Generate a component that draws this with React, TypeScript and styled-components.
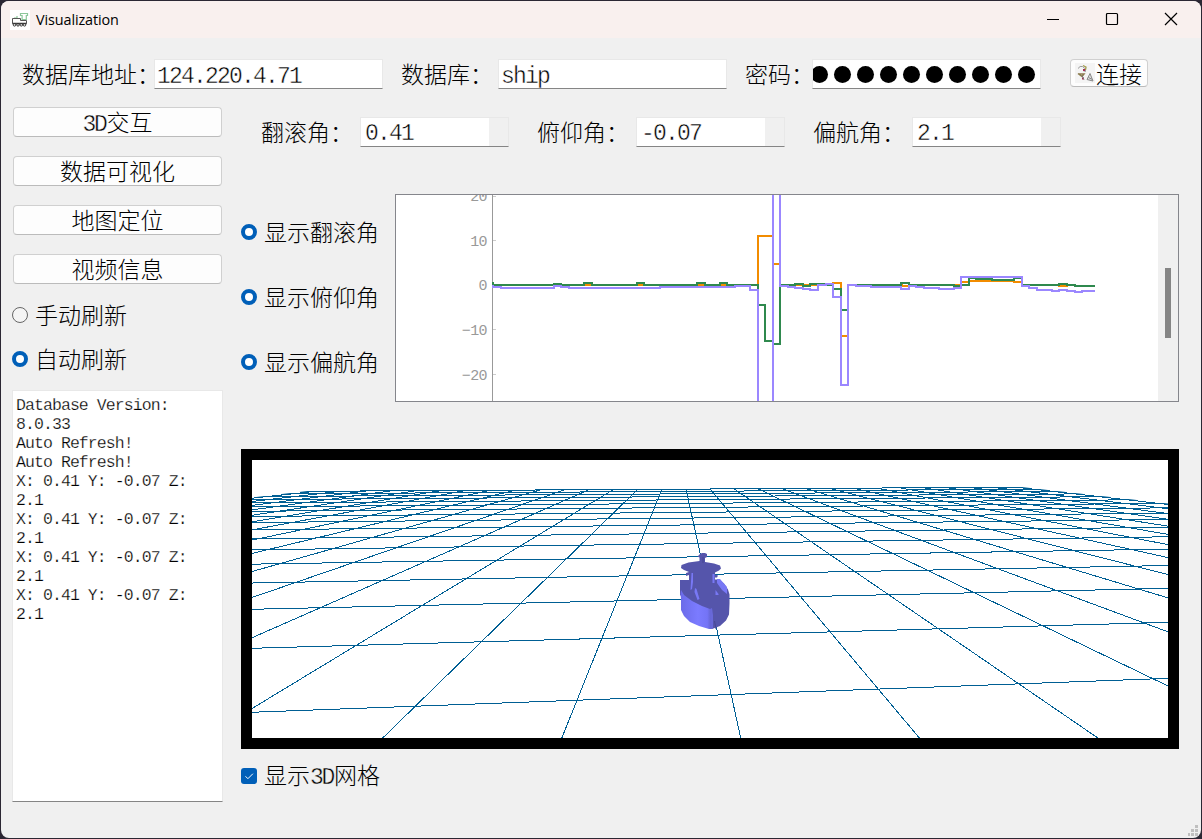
import React from "react";
import styled, { createGlobalStyle } from "styled-components";

const GlobalStyle = createGlobalStyle`
  * { box-sizing: border-box; }
  html, body { margin: 0; padding: 0; background: #1d1a26; }
`;

const cjk = `"Noto Sans CJK SC", sans-serif`;
const mono = `"Liberation Mono", "Noto Sans CJK SC", monospace`;

const Desktop = styled.div`
  width: 1202px;
  height: 839px;
  padding: 1px;
  background: #2b2733;
  overflow: hidden;
`;

const Window = styled.div`
  position: relative;
  width: 1200px;
  height: 837px;
  display: flex;
  flex-direction: column;
  background: #f0f0f0;
  border-radius: 8px;
  overflow: hidden;
  color: #000;
  font: 300 23px/28px ${cjk};
`;

const TitleBar = styled.header`
  flex: none;
  height: 37px;
  display: flex;
  align-items: center;
  padding: 0 23px 0 9px;
  background: #f9f0ee;
`;

const AppIcon = styled.svg`
  width: 20px;
  height: 20px;
  margin-right: 6px;
  background: #fff;
`;

const Title = styled.h1`
  margin: 0;
  flex: 1;
  font: 400 14.4px/20px "Open Sans", "Noto Sans", sans-serif;
  letter-spacing: -0.1px;
`;

const WindowControls = styled.div`
  display: flex;
  gap: 45px;
  margin-top: -2px;
  svg { width: 14px; height: 14px; }
`;

const ConnectionRow = styled.div`
  display: flex;
  height: 30px;
  margin: 21px 0 0 21px;
`;

const Label = styled.label<{ $width: number }>`
  flex: none;
  width: ${(p) => p.$width}px;
  height: 30px;
  white-space: nowrap;
`;

const Field = styled.div<{ $gap?: number }>`
  flex: none;
  display: flex;
  align-items: center;
  width: 229px;
  height: 30px;
  margin-right: ${(p) => p.$gap ?? 18}px;
  padding: 0 0 0 2px;
  background: #fff;
  border: 1px solid #e8e8e8;
  border-bottom-color: #858585;
  overflow: hidden;
  font: 400 23px/28px ${mono};
  letter-spacing: -1.8px;
  -webkit-text-stroke: 0.45px #fff;
`;

const FieldText = styled.span`
  padding-top: 5px;
`;

const PasswordDots = styled.div`
  display: flex;
  flex: none;
  gap: 6px;
  margin-left: -4px;
`;

const Dot = styled.i`
  width: 17px;
  height: 17px;
  border-radius: 50%;
  background: #000;
`;

const ConnectButton = styled.button`
  display: flex;
  align-items: center;
  width: 78px;
  height: 28px;
  margin: 0;
  padding: 0 0 0 4px;
  background: #fdfdfd;
  border: 1px solid #d0d0d0;
  border-bottom-color: #bbb;
  border-radius: 4px;
  font: 300 23px/26px ${cjk};
  white-space: nowrap;
  svg { flex: none; width: 20px; height: 20px; margin-right: 1px; }
`;

const Main = styled.main`
  display: flex;
  align-items: flex-start;
  padding: 18px 0 0 11px;
`;

const Sidebar = styled.aside`
  flex: none;
  width: 211px;
  margin-right: 18px;
  display: flex;
  flex-direction: column;
`;

const NavButton = styled.button`
  width: 209px;
  height: 30px;
  margin: 0 0 19px 1px;
  padding: 0 0 2px;
  background: #fdfdfd;
  border: 1px solid #d0d0d0;
  border-bottom-color: #bbb;
  border-radius: 4px;
  font: 300 23px/26px ${cjk};
`;

const Latin = styled.span<{ $halo: string }>`
  font: 400 23px/1 ${mono};
  letter-spacing: -2.3px;
  margin-right: 1px;
  -webkit-text-stroke: 0.45px ${(p) => p.$halo};
`;

const Option = styled.div<{ $height: number }>`
  display: flex;
  align-items: center;
  gap: 7px;
  height: ${(p) => p.$height}px;
  white-space: nowrap;
`;

const OptionText = styled.span`
  padding-bottom: 2px;
`;

const Radio = styled.i<{ $on?: boolean }>`
  flex: none;
  width: 16px;
  height: 16px;
  border-radius: 50%;
  background: ${(p) => (p.$on ? "#fff" : "#f5f5f5")};
  border: ${(p) => (p.$on ? "4.8px solid #005fb8" : "1px solid #666")};
`;

const RefreshOptions = styled.div`
  margin-top: -10px;
`;

const Log = styled.pre`
  width: 211px;
  height: 412px;
  margin: 9px 0 0;
  padding: 5px 0 0 3px;
  background: #fff;
  border: 1px solid #e8e8e8;
  border-bottom-color: #858585;
  font: 400 16.5px/19px ${mono};
  letter-spacing: -0.92px;
  -webkit-text-stroke: 0.25px #fff;
`;

const Content = styled.section`
  width: 938px;
  display: flex;
  flex-direction: column;
`;

const AngleRow = styled.div`
  display: flex;
  margin: 10px 0 0 20px;
`;

const SpinBox = styled.div`
  display: flex;
  width: 149px;
  height: 30px;
  margin-right: 28px;
  padding: 1px 0 0 4px;
  border: 1px solid #e8e8e8;
  border-bottom-color: #858585;
  background: linear-gradient(90deg, #fff 128px, #f0f0f0 128px);
  font: 400 23px/30px ${mono};
  letter-spacing: -1.8px;
  -webkit-text-stroke: 0.45px #fff;
`;

const ChartRow = styled.div`
  display: flex;
  height: 208px;
  margin-top: 47px;
`;

const SeriesOptions = styled.div`
  width: 154px;
  padding-top: 5px;
`;

const ChartPanel = styled.div`
  display: flex;
  width: 784px;
  height: 208px;
  background: #fff;
  border: 1px solid #85868c;
`;

const ScrollTrack = styled.div`
  width: 20px;
  padding: 73px 0 0 7px;
  background: #f0f0f0;
`;

const ScrollThumb = styled.div`
  width: 6px;
  height: 70px;
  background: #858585;
`;

const Scene = styled.div`
  height: 300px;
  margin-top: 47px;
  border: 11px solid #000;
  background: #fff;
  svg { display: block; }
`;

const CheckBox = styled.svg`
  flex: none;
  width: 16px;
  height: 16px;
  border-radius: 3px;
  background: #005fb8;
`;

const GridOption = styled(Option)`
  margin-top: 7px;
`;

const SizeGrip = styled.svg`
  position: absolute;
  right: 3px;
  bottom: 2px;
  width: 10px;
  height: 11px;
`;

const TICKS = [
  { label: "20", y: 196 },
  { label: "10", y: 240.5 },
  { label: "0", y: 285 },
  { label: "-10", y: 329.5 },
  { label: "-20", y: 374.5 },
];

const SERIES = [
  {
    color: "#f28c00",
    d: "M493 285H758V236H773V264H780V285H833V283H841V336H848V285H902V286H909V285H961V282H969V281H1014V282H1022V285H1059V286H1067V285H1075V286H1095",
  },
  {
    color: "#2f894e",
    d: "M493 282V285H554V284H561V285H584V283H592V285H637V283H644V285H697V283H705V285H720V283H727V285H758V305H765V341H773V344H780V285H795V284H803V286H810V284H825V285H833V289H841V310H848V285H877V285H901V283H909V285H954V286H961V285H969V278H976V279H992V280H1014V278H1022V285H1059V284H1067V285H1075V286H1095",
  },
  {
    color: "#9b87ff",
    d: "M493 285V287H501V288H554V286H561V287H569V288H660V287H735V286H750V290H758V420M773 420V180M780 180V286H788V287H795V288H803V289H810V290H818V285H826V284H833V297H841V385H848V285H856V286H871V287H901V289H909V286H916V287H924V288H939V289H954V288H961V277H1022V286H1029V288H1037V290H1052V291H1059V290H1067V291H1075V292H1082V291H1095",
  },
];

const AngleChart = () => (
  <svg width="762" height="206" viewBox="396 195 762 206">
    {TICKS.map((t) => (
      <g key={t.label}>
        <text
          x="487"
          y={t.y + 5}
          textAnchor="end"
          fill="#999"
          fontFamily="Liberation Mono"
          fontSize="15"
          letterSpacing="-0.6"
        >
          {t.label.replace("-", "−")}
        </text>
        <path d={`M493 ${Math.floor(t.y) + 0.5}h3`} stroke="#ccc" />
      </g>
    ))}
    <path d="M492.5 195V401" stroke="#999" />
    <g fill="none" strokeWidth="2">
      {SERIES.map((s) => (
        <path key={s.color} d={s.d} stroke={s.color} />
      ))}
    </g>
  </svg>
);

// Ground plane: rows run across the view, columns recede to the horizon.
const rows = Array.from({ length: 17 }, (_, j) => ({
  left: 448.6 + 822.7 / (j + 3.12),
  right: 449.3 + 707.7 / (j + 3.09),
}));
const farRow = rows[16];
const columns = Array.from({ length: 30 }, (_, k) => {
  const i = k - 15;
  const x = 686 + (24.1 * i) / (1 + 0.0015 * i);
  return {
    x,
    y: farRow.left + ((farRow.right - farRow.left) * (x - 252)) / 916,
    base: 740.7 + (178.8 * i) / (1 + 0.0006 * i),
  };
});

const ShipScene = () => (
  <svg width="916" height="278" viewBox="252 460 916 278">
    <defs>
      <clipPath id="plane">
        <path d="M316 490L252 497.5V738H1168V503.5L1017 486.5V485H316z" />
      </clipPath>
      <linearGradient id="hull" x1="0" x2="1">
        <stop offset="0" stopColor="#6b6be8" />
        <stop offset="0.55" stopColor="#7b7bff" />
        <stop offset="0.85" stopColor="#7474f6" />
        <stop offset="1" stopColor="#6060c8" />
      </linearGradient>
    </defs>
    <g stroke="#005f94" strokeWidth="1" shapeRendering="crispEdges">
      <g clipPath="url(#plane)">
        {rows.map((r, j) => (
          <line key={j} x1="252" y1={r.left} x2="1168" y2={r.right} />
        ))}
      </g>
      {columns.map((c, k) => (
        <line key={k} x1={c.x} y1={c.y} x2={c.base} y2="738" />
      ))}
    </g>
    <path
      fill="#5555ab"
      d="M700 554l2-1h3l2 1v3l-2 1v4l9 1.500 6 2 1 3-2 2-4 2v2l3 1-1 2h-2v2h4l5 4 4 6 1.500 5v9l-.5 11-3 6-6 5.500-8 3-12-16-20-18V580h9v-5l-3 1v-3l3-1-5-2-3-2 .5-3 7-2.500 11-1.500v-3.500l-2-1z"
    />
    <path
      fill="url(#hull)"
      d="M681 590l3 5 8 6 10 5 8 3 2 4v16h-3l-10-3-9-4-6-6-3-6v-11l-.5-5z"
    />
    <path fill="#6868d8" d="M710 609l2-1 1 7v13l-2 1z" />
    <path
      fill="#7878f5"
      d="M691.500 573h1.500v9l-1 7-1.500 1zM695 588l1.500 1 3 10-2 1-3-8zM712.500 574h2v9h-2zM717 579h3l7 8v7l-5-4-5-7zM715.500 590l3 4v1h-3z"
    />
    <path d="M703 557v6M714.500 621l1.500 8" stroke="#474794" />
  </svg>
);

const TrainIcon = () => (
  <AppIcon viewBox="0 0 20 20" fill="none">
    <path d="M10.500 3.500h7v2h-1.200v4h-4.200v-4h-1.600zM4 8h3v-2" stroke="#8cc79a" strokeWidth="1.200" />
    <path d="M2.500 8.500h8v2h6v3h-14z" stroke="#555" />
    <path d="M2.500 13.500h14" stroke="#444" strokeWidth="1.400" />
    <g stroke="#333">
      <circle cx="4.500" cy="14.800" r="1.300" />
      <circle cx="8" cy="14.800" r="1.300" />
      <circle cx="11.300" cy="14.800" r="1.300" />
      <circle cx="14.500" cy="14.800" r="1.300" />
    </g>
  </AppIcon>
);

const LinkIcon = () => (
  <svg viewBox="0 0 20 20" fill="none">
    <path fill="#f4f4f4" d="M0 0h20v20H0z" />
    <path d="M3 5.500q2-3 4.500-2l3 2.500v2.500l-2.500-1" stroke="#999" />
    <path d="M8 2.500l3 1.500-.5 3" stroke="#a29a48" strokeWidth="1.300" />
    <path d="M8 7h2M7 15.500h2" stroke="#a52c55" strokeWidth="2" />
    <path d="M3 10.500l4 3 2-2.500h-6" stroke="#8b7b4e" strokeWidth="1.500" />
    <path d="M7 12.500l2 4" stroke="#777" />
    <path d="M15 10.500l-3 6 6 1.500zM13.500 14.500l4 2" stroke="#888" fill="#ddd" />
  </svg>
);

const LOG_TEXT = [
  "Database Version:",
  "8.0.33",
  "Auto Refresh!",
  "Auto Refresh!",
  ...Array.from({ length: 4 }, () => "X: 0.41 Y: -0.07 Z:\n2.1"),
].join("\n");

const ANGLES = [
  { label: "翻滚角：", value: "0.41" },
  { label: "俯仰角：", value: "-0.07" },
  { label: "偏航角：", value: "2.1" },
];

export default function App() {
  return (
    <Desktop>
      <GlobalStyle />
      <Window>
        <TitleBar>
          <TrainIcon />
          <Title>Visualization</Title>
          <WindowControls>
            <svg viewBox="0 0 14 14"><path d="M1 7.500h12" stroke="#000" /></svg>
            <svg viewBox="0 0 14 14"><rect x="1.500" y="1.500" width="11" height="11" rx="1" fill="none" stroke="#000" strokeWidth="1.200" /></svg>
            <svg viewBox="0 0 14 14"><path d="M1 1l12 12M13 1L1 13" stroke="#000" strokeWidth="1.200" /></svg>
          </WindowControls>
        </TitleBar>

        <ConnectionRow>
          <Label $width={132}>数据库地址：</Label>
          <Field><FieldText>124.220.4.71</FieldText></Field>
          <Label $width={97}>数据库：</Label>
          <Field><FieldText>ship</FieldText></Field>
          <Label $width={67}>密码：</Label>
          <Field $gap={29}>
            <PasswordDots>
              {Array.from({ length: 10 }, (_, i) => <Dot key={i} />)}
            </PasswordDots>
          </Field>
          <ConnectButton><LinkIcon />连接</ConnectButton>
        </ConnectionRow>

        <Main>
          <Sidebar>
            <NavButton><Latin $halo="#fdfdfd">3D</Latin>交互</NavButton>
            <NavButton>数据可视化</NavButton>
            <NavButton>地图定位</NavButton>
            <NavButton>视频信息</NavButton>
            <RefreshOptions>
              <Option $height={44}><Radio /><OptionText>手动刷新</OptionText></Option>
              <Option $height={44}><Radio $on /><OptionText>自动刷新</OptionText></Option>
            </RefreshOptions>
            <Log>{LOG_TEXT}</Log>
          </Sidebar>

          <Content>
            <AngleRow>
              {ANGLES.map((a) => (
                <React.Fragment key={a.label}>
                  <Label $width={99}>{a.label}</Label>
                  <SpinBox>{a.value}</SpinBox>
                </React.Fragment>
              ))}
            </AngleRow>
            <ChartRow>
              <SeriesOptions>
                <Option $height={65}><Radio $on /><OptionText>显示翻滚角</OptionText></Option>
                <Option $height={65}><Radio $on /><OptionText>显示俯仰角</OptionText></Option>
                <Option $height={65}><Radio $on /><OptionText>显示偏航角</OptionText></Option>
              </SeriesOptions>
              <ChartPanel>
                <AngleChart />
                <ScrollTrack><ScrollThumb /></ScrollTrack>
              </ChartPanel>
            </ChartRow>
            <Scene><ShipScene /></Scene>
            <GridOption $height={40}>
              <CheckBox viewBox="0 0 16 16">
                <path d="M4.500 8.300l2.400 2.400 5-5" fill="none" stroke="#fff" strokeWidth="1" />
              </CheckBox>
              <OptionText>显示<Latin $halo="#f0f0f0">3D</Latin>网格</OptionText>
            </GridOption>
          </Content>
        </Main>
        <SizeGrip viewBox="0 0 10 11" fill="#bfbfbf">
          <path d="M7 0h3v3H7zM3 4h3v3H3zM7 4h3v3H7zM0 8h2v3H0zM3 8h3v3H3zM7 8h3v3H7z" />
        </SizeGrip>
      </Window>
    </Desktop>
  );
}
